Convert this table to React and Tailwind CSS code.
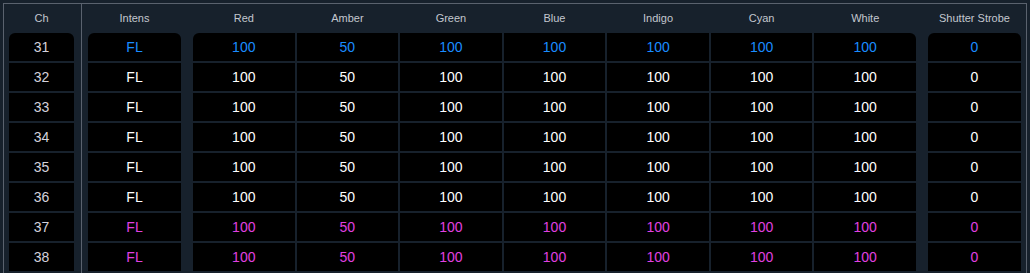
import React from 'react';

const colorCols = ['Red', 'Amber', 'Green', 'Blue', 'Indigo', 'Cyan', 'White'];
const colorVals = ['100', '50', '100', '100', '100', '100', '100'];

// channel rows: tone decides the text colour
const rows = [
  { ch: 31, tone: 'blue' },
  { ch: 32, tone: 'white' },
  { ch: 33, tone: 'white' },
  { ch: 34, tone: 'white' },
  { ch: 35, tone: 'white' },
  { ch: 36, tone: 'white' },
  { ch: 37, tone: 'magenta' },
  { ch: 38, tone: 'magenta' },
];

const toneClass = {
  blue: 'text-[#1a8cff]',
  white: 'text-white',
  magenta: 'text-[#e040e0]',
};

const Header = ({ children }) => (
  <div className="h-[29px] flex items-center justify-center text-[11px] text-[#c3c7cf] whitespace-nowrap">
    {children}
  </div>
);

const Cell = ({ children, className = '' }) => (
  <div className={`h-[28px] bg-black flex items-center justify-center text-[14px] ${className}`}>
    {children}
  </div>
);

export default function App() {
  return (
    <div className="w-[1030px] h-[273px] overflow-hidden bg-[#17212c] pt-[3px] px-[3px] font-['Liberation_Sans',Arial,sans-serif]">
      <div className="h-[300px] border-t border-l border-r border-[#5a626e] flex">
        {/* Channel column */}
        <div className="w-[78px] border-r border-[#5a626e] pl-[5px]">
          <div className="w-[65px]">
            <Header>Ch</Header>
            <div className="flex flex-col gap-[2px] rounded-t-[6px] overflow-hidden">
              {rows.map((r) => (
                <Cell key={r.ch} className="text-[#d4d2dc]">{r.ch}</Cell>
              ))}
            </div>
          </div>
        </div>

        {/* Intensity */}
        <div className="w-[93px] ml-[6px]">
          <Header>Intens</Header>
          <div className="flex flex-col gap-[2px] rounded-t-[6px] overflow-hidden">
            {rows.map((r) => (
              <Cell key={r.ch} className={toneClass[r.tone]}>FL</Cell>
            ))}
          </div>
        </div>

        {/* Colour mixing */}
        <div className="w-[723px] ml-[12px]">
          <div className="grid grid-cols-7 gap-x-[2px]">
            {colorCols.map((c) => (
              <Header key={c}>{c}</Header>
            ))}
          </div>
          <div className="grid grid-cols-7 gap-[2px] rounded-t-[6px] overflow-hidden">
            {rows.map((r) =>
              colorVals.map((v, i) => (
                <Cell key={`${r.ch}-${i}`} className={toneClass[r.tone]}>{v}</Cell>
              ))
            )}
          </div>
        </div>

        {/* Shutter */}
        <div className="w-[93px] ml-[12px]">
          <Header>Shutter Strobe</Header>
          <div className="flex flex-col gap-[2px] rounded-t-[6px] overflow-hidden">
            {rows.map((r) => (
              <Cell key={r.ch} className={toneClass[r.tone]}>0</Cell>
            ))}
          </div>
        </div>
      </div>
    </div>
  );
}
